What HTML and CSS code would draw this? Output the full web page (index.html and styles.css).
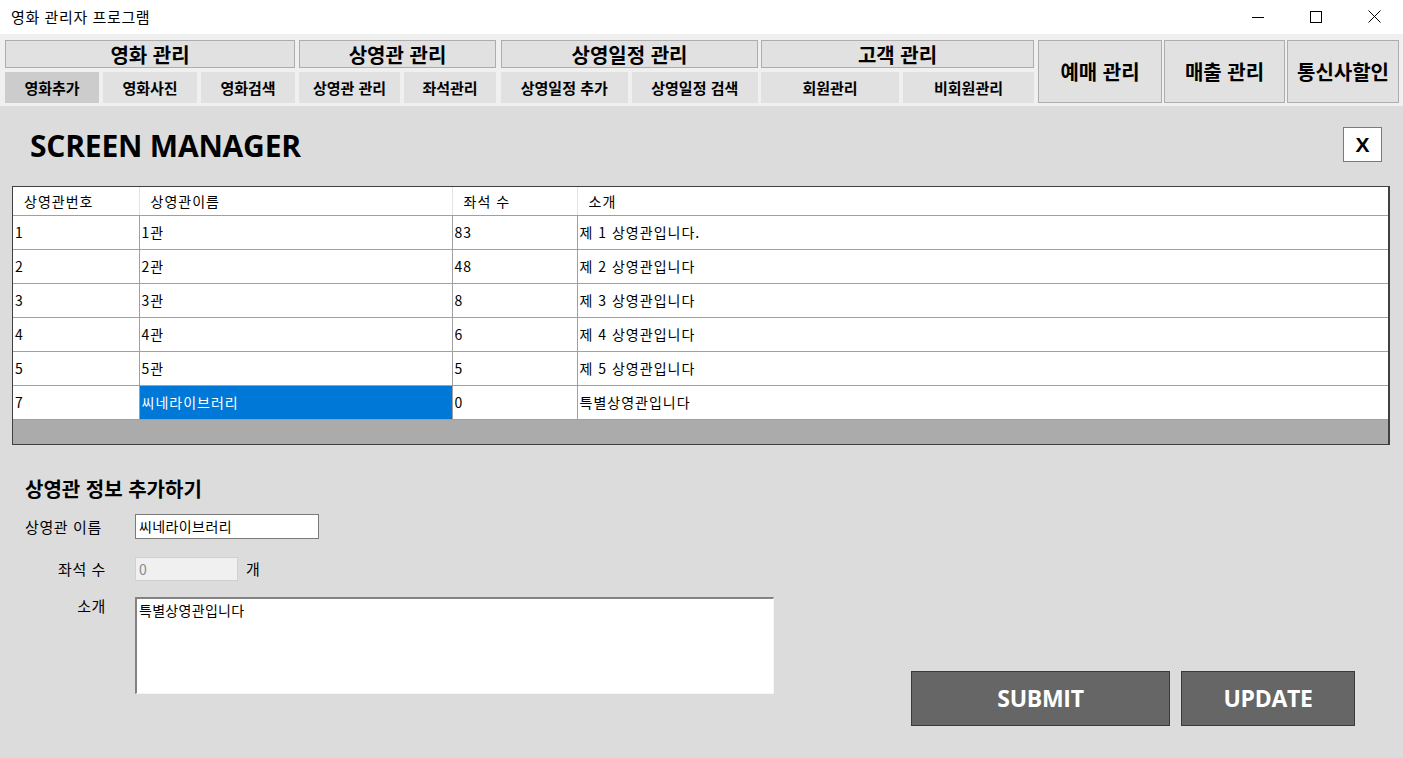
FILE: index.html
```html
<!DOCTYPE html>
<html lang="ko">
<head>
<meta charset="utf-8">
<title>영화 관리자 프로그램</title>
<link rel="stylesheet" href="styles.css">
</head>
<body>
<div class="window">
  <div class="titlebar">
    <span class="title">영화 관리자 프로그램</span>
    <div class="winctl">
      <span class="wbtn"><svg width="12" height="12" viewBox="0 0 12 12"><path d="M0 6.5h12" stroke="#000" stroke-width="1"/></svg></span>
      <span class="wbtn"><svg width="12" height="12" viewBox="0 0 12 12"><rect x="0.5" y="0.5" width="11" height="11" fill="none" stroke="#000" stroke-width="1"/></svg></span>
      <span class="wbtn"><svg width="13" height="13" viewBox="0 0 13 13"><path d="M0.5 0.5L12.5 12.5M12.5 0.5L0.5 12.5" stroke="#000" stroke-width="1"/></svg></span>
    </div>
  </div>

  <div class="menubar">
    <div class="group g1">
      <div class="ghead">영화 관리</div>
      <div class="subs">
        <div class="sub active">영화추가</div>
        <div class="sub">영화사진</div>
        <div class="sub">영화검색</div>
      </div>
    </div>
    <div class="group g2">
      <div class="ghead">상영관 관리</div>
      <div class="subs">
        <div class="sub s-screen">상영관 관리</div>
        <div class="sub s-seat">좌석관리</div>
      </div>
    </div>
    <div class="group g3">
      <div class="ghead">상영일정 관리</div>
      <div class="subs">
        <div class="sub">상영일정 추가</div>
        <div class="sub">상영일정 검색</div>
      </div>
    </div>
    <div class="group g4">
      <div class="ghead">고객 관리</div>
      <div class="subs">
        <div class="sub s-member">회원관리</div>
        <div class="sub s-guest">비회원관리</div>
      </div>
    </div>
    <div class="big b1">예매 관리</div>
    <div class="big b2">매출 관리</div>
    <div class="big b3">통신사할인</div>
  </div>

  <div class="main">
    <div class="headrow">
      <h1 class="heading">SCREEN MANAGER</h1>
      <div class="closebtn">X</div>
    </div>

    <div class="grid">
      <table class="tbl">
        <colgroup>
          <col class="c1"><col class="c2"><col class="c3"><col class="c4">
        </colgroup>
        <thead>
          <tr><th>상영관번호</th><th>상영관이름</th><th>좌석 수</th><th>소개</th></tr>
        </thead>
        <tbody>
          <tr><td>1</td><td>1관</td><td>83</td><td>제 1 상영관입니다.</td></tr>
          <tr><td>2</td><td>2관</td><td>48</td><td>제 2 상영관입니다</td></tr>
          <tr><td>3</td><td>3관</td><td>8</td><td>제 3 상영관입니다</td></tr>
          <tr><td>4</td><td>4관</td><td>6</td><td>제 4 상영관입니다</td></tr>
          <tr><td>5</td><td>5관</td><td>5</td><td>제 5 상영관입니다</td></tr>
          <tr><td>7</td><td class="sel">씨네라이브러리</td><td>0</td><td>특별상영관입니다</td></tr>
        </tbody>
      </table>
      <div class="filler"></div>
    </div>

    <div class="bottom">
      <div class="form">
        <h2 class="formtitle">상영관 정보 추가하기</h2>
        <div class="frow r1">
          <span class="lbl left">상영관 이름</span>
          <div class="input name">씨네라이브러리</div>
        </div>
        <div class="frow r2">
          <span class="lbl">좌석 수</span>
          <div class="input seats">0</div>
          <span class="unit">개</span>
        </div>
        <div class="frow r3">
          <span class="lbl top">소개</span>
          <div class="textarea">특별상영관입니다</div>
        </div>
      </div>
      <div class="actions">
        <div class="act submit">SUBMIT</div>
        <div class="act update">UPDATE</div>
      </div>
    </div>
  </div>
</div>
</body>
</html>
```

FILE: styles.css
```css
* { box-sizing: border-box; }
html, body { margin: 0; padding: 0; }
body {
  width: 1403px;
  height: 758px;
  overflow: hidden;
  font-family: "Noto Sans CJK KR", "Noto Sans", sans-serif;
  background: #dcdcdc;
  color: #000;
}
.window { display: flex; flex-direction: column; height: 758px; }

.titlebar {
  height: 34px;
  background: #fff;
  display: flex;
  align-items: center;
  justify-content: space-between;
  padding-left: 11px;
}
.title { font-size: 15px; letter-spacing: 0.6px; margin-top: -2px; }
.winctl { display: flex; height: 34px; }
.wbtn {
  width: 58px;
  display: flex;
  align-items: center;
  justify-content: center;
  margin-top: -1px;
}

.menubar {
  background: #f0f0f0;
  display: flex;
  padding: 6px 0 3px 5px;
  height: 72px;
}
.group { display: flex; flex-direction: column; gap: 4px; margin-right: 4px; }
.g1 { width: 290px; }
.g2 { width: 197px; margin-right: 5px; }
.g3 { width: 257px; margin-right: 3px; }
.g4 { width: 273px; }
.ghead {
  height: 28px;
  background: #e1e1e1;
  border: 1px solid #adadad;
  display: flex;
  align-items: center;
  justify-content: center;
  font-weight: 700;
  font-size: 20px;
}
.subs { display: flex; gap: 4px; height: 31px; }
.sub {
  flex: 1;
  background: #e1e1e1;
  display: flex;
  align-items: center;
  justify-content: center;
  font-weight: 700;
  font-size: 15px;
}
.sub.active { background: #cccccc; }
.s-screen { flex: 0 0 101px; }
.s-seat { flex: 1; }
.s-member { flex: 0 0 138px; }
.s-guest { flex: 1; }
.big {
  height: 63px;
  background: #e1e1e1;
  border: 1px solid #adadad;
  display: flex;
  align-items: center;
  justify-content: center;
  font-weight: 700;
  font-size: 20px;
  margin-right: 2px;
}
.b1 { width: 124px; }
.b2 { width: 121px; }
.b3 { width: 112px; }

.main { padding: 0 13px 0 12px; flex: 1; }
.headrow {
  display: flex;
  align-items: center;
  justify-content: space-between;
  height: 35px;
  margin-top: 21px;
  margin-bottom: 24px;
  padding-left: 18px;
  padding-right: 8px;
}
.heading {
  margin: 0;
  font-family: "Open Sans", sans-serif;
  font-weight: 700;
  font-size: 30px;
  letter-spacing: -0.2px;
  margin-top: 2px;
}
.closebtn {
  width: 39px;
  height: 35px;
  background: #fff;
  border: 1px solid #7a7a7a;
  display: flex;
  align-items: center;
  justify-content: center;
  font-family: "Liberation Sans", sans-serif;
  font-weight: 700;
  font-size: 21px;
}

.grid {
  border: 1px solid #404040;
  border-width: 1px 2px 1px 1px;
  background: #ababab;
  width: 1378px;
}
.tbl {
  width: 100%;
  border-collapse: collapse;
  table-layout: fixed;
  background: #fff;
  font-size: 14px;
}
.c1 { width: 126px; }
.c2 { width: 313px; }
.c3 { width: 125px; }
.tbl th {
  height: 28px;
  font-weight: 400;
  text-align: left;
  padding: 0 0 0 11px;
  border-right: 1px solid #e4e4e4;
  border-bottom: 1px solid #a0a0a0;
  letter-spacing: 1px;
}
.tbl td {
  height: 34px;
  padding: 0 0 0 2px;
  border: 1px solid #a0a0a0;
  border-top: 0;
  letter-spacing: 1px;
}
.tbl td:first-child { border-left: 0; }
.tbl td:last-child, .tbl th:last-child { border-right: 0; }
.tbl td.sel { background: #0078d7; color: #fff; }
.filler { height: 24px; }

.bottom { display: flex; padding-left: 13px; }
.form { display: flex; flex-direction: column; }
.formtitle {
  margin: 31px 0 12px 0;
  font-size: 20px;
  font-weight: 700;
  line-height: 26px;
}
.frow { display: flex; align-items: center; }
.lbl {
  width: 81px;
  text-align: right;
  font-size: 15px;
  letter-spacing: 0.6px;
  margin-right: 29px;
  white-space: nowrap;
}
.lbl.left { text-align: left; }
.lbl.top { align-self: flex-start; margin-top: -2px; }
.input {
  height: 25px;
  background: #fff;
  border: 1px solid #7a7a7a;
  font-size: 14px;
  padding: 0 3px;
  display: flex;
  align-items: center;
  letter-spacing: 0.4px;
}
.name { width: 184px; }
.r2 { margin-top: 18px; }
.seats {
  width: 103px;
  height: 24px;
  background: #f0f0f0;
  border-color: #d0d0d0;
  color: #8a8a8a;
}
.unit { margin-left: 8px; font-size: 15px; }
.r3 { margin-top: 16px; }
.textarea {
  width: 639px;
  height: 97px;
  background: #fff;
  border-style: solid;
  border-width: 2px 1px 1px 2px;
  border-color: #838383 #f5f5f5 #f5f5f5 #838383;
  font-size: 14px;
  padding: 1px 2px;
  letter-spacing: 0.3px;
}

.actions { display: flex; gap: 11px; margin-left: 137px; margin-top: 226px; align-self: flex-start; }
.act {
  height: 55px;
  background: #666666;
  border: 1px solid #3a3a3a;
  color: #fff;
  display: flex;
  align-items: center;
  justify-content: center;
  font-family: "Open Sans", sans-serif;
  font-weight: 700;
  font-size: 23px;
  letter-spacing: -0.3px;
}
.submit { width: 259px; }
.update { width: 174px; }
```
